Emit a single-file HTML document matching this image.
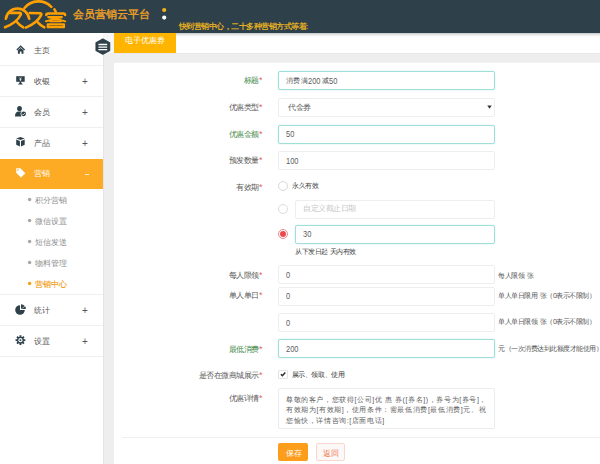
<!DOCTYPE html>
<html><head><meta charset="utf-8">
<style>
*{box-sizing:border-box;margin:0;padding:0}
html,body{width:600px;height:464px;overflow:hidden;background:#fff;font-family:"Liberation Sans",sans-serif;color:#555}
.a{position:absolute;white-space:nowrap}
#hdr{position:absolute;left:0;top:0;width:600px;height:33px;background:#2e414b}
#side{position:absolute;left:0;top:33px;width:103px;height:431px;background:#fff}
#gap{position:absolute;left:103px;top:33px;width:11px;height:431px;background:#eeeeee;border-left:1px solid #e4e4e4}
#tabbar{position:absolute;left:103px;top:33px;width:497px;height:20px;background:linear-gradient(to bottom,#c2c5c7 0px,#e2e3e3 1.5px,#f7f7f7 3px,#fff 4.5px)}
#tabgap{position:absolute;left:103px;top:33px;width:11px;height:20px;background:#f6f6f6}
#band{position:absolute;left:114px;top:53px;width:486px;height:10px;background:linear-gradient(to bottom,#e6e6e6 0,#eeeeee 1.5px,#eeeeee 9px,#f3f3f3 10px)}
#panel{position:absolute;left:114px;top:63px;width:486px;height:401px;background:#fff}
.sep{position:absolute;left:0;width:103px;height:1px;background:#efefef}
.mi{position:absolute;left:34px;font-size:8px;line-height:11px;color:#555}
.plus{position:absolute;left:82px;font-size:10px;line-height:12px;color:#555}
.sub{position:absolute;left:34.5px;font-size:8px;line-height:11px;color:#8c8c8c}
.dot{position:absolute;left:27.5px;width:3.5px;height:3.5px;border-radius:50%;background:#a0a0a0}
.lbl{position:absolute;white-space:nowrap;right:337.5px;font-size:8px;letter-spacing:-0.5px;line-height:11.5px;color:#5a5a5a;text-align:right}
.lbl i{font-style:normal;color:#ea5f5a;font-size:9px;vertical-align:top;line-height:11px;margin-left:0;letter-spacing:0}
.lbl.g{color:#468a4a}
.inp{position:absolute;left:278px;width:217px;height:19px;border:1px solid #eeeeee;border-radius:2px;background:#fff;font-size:8px;letter-spacing:-0.5px;line-height:17px;padding-left:7px;color:#555}
.inp.t{border:1px solid #9edfd9;box-shadow:0 0 1.5px rgba(120,215,205,0.45)}
.help{position:absolute;white-space:nowrap;left:498px;font-size:7px;letter-spacing:-0.5px;word-spacing:1.5px;line-height:8px;color:#555}
.radio{position:absolute;left:278px;width:10px;height:10px;border-radius:50%;border:1px solid #d8d8d8;background:#fff}
.d{font-weight:normal;font-size:8.9px;letter-spacing:0;display:inline-block;transform:scaleX(0.84);transform-origin:0 50%;line-height:17px;vertical-align:top;position:relative;top:0.7px;color:#5c5c5c}
</style></head><body>
<div id="hdr"></div><div class="a" style="left:0;top:33px;width:600px;height:1px;background:rgba(46,65,75,0.25)"></div>
<!-- logo -->
<svg class="a" style="left:0;top:0" width="70" height="32" viewBox="0 0 70 32">
 <g fill="none" stroke="#ffa000" stroke-width="2.6" stroke-linecap="round" stroke-linejoin="round">
  <path d="M5.8 18.8 A11.8 11.8 0 0 1 29.2 18.8"/>
  <path d="M24.5 8 A18 18 0 0 1 51.3 6.8"/>
  <path d="M9.5 12.9 L19.8 12.9 Q21.6 13.2 20.6 15 Q16.5 23 5 27.2"/>
  <path d="M16.6 21.7 Q19.3 25 23.3 27.3"/>
  <path d="M29.8 13 L40.3 13.2 Q42 13.5 41 15.3 Q37 23 25.8 27.6"/>
  <path d="M37.8 22.3 Q40.3 25.3 44.4 27.3"/>
  <path d="M54.4 9.3 L55.7 11.6"/>
  <path d="M46.3 15 Q46.3 13.5 48.2 13.5 L63.4 13.5 Q65.1 13.5 65.1 15" stroke-width="2.5"/>
  <path d="M48.3 17.1 H61.8" stroke-width="2.3"/>
  <path d="M49 17.4 Q57 18.8 65.3 21.3 M61.3 17.4 Q54 18.8 45.8 21.3" stroke-width="1.9"/>
  <path d="M50 21.3 H61" stroke-width="2.1"/>
  <rect x="47.8" y="24.4" width="16.1" height="2.8" stroke-width="2.3"/>
 </g>
</svg>
<div class="a" style="left:73px;top:8px;font-size:10.6px;line-height:12px;color:#f0a126;-webkit-text-stroke:0.35px #f0a126">会员营销云平台</div>
<svg class="a" style="left:150px;top:0" width="30" height="30"><circle cx="14.2" cy="10" r="2.1" fill="#f5b316"/><circle cx="14.2" cy="17.6" r="2.1" fill="#fff"/></svg>

<div class="a" style="left:178.5px;top:22px;font-size:8px;letter-spacing:-0.5px;line-height:9px;color:#f3bb1a;-webkit-text-stroke:0.2px #f3bb1a">快到营销中心，二十多种营销方式等着:</div>

<div id="side"></div>
<div id="gap"></div>
<div id="tabbar"></div>
<div id="tabgap"></div>
<div id="band"></div>
<div id="panel"></div>
<div class="a" style="left:114px;top:33px;width:62px;height:20px;background:#ffb400;color:#fff;font-size:7.5px;line-height:16px;text-align:center">电子优惠券</div>

<!-- sidebar -->
<div class="sep" style="top:65px"></div>
<div class="sep" style="top:96px"></div>
<div class="sep" style="top:127px"></div>
<div class="a" style="left:0;top:159px;width:103px;height:30px;background:#fdab24"></div>
<div class="sep" style="top:294px"></div>
<div class="sep" style="top:325px"></div>
<div class="sep" style="top:356px"></div>

<div class="mi" style="top:45px">主页</div>
<div class="mi" style="top:76px">收银</div><div class="plus" style="top:76px">+</div>
<div class="mi" style="top:107px">会员</div><div class="plus" style="top:107px">+</div>
<div class="mi" style="top:138px">产品</div><div class="plus" style="top:138px">+</div>
<div class="mi" style="top:168px;color:#fff">营销</div><div class="a" style="left:85px;top:174px;width:3.5px;height:1px;background:rgba(255,255,255,0.85)"></div>
<svg class="a" style="left:0;top:0" width="40" height="300"><g fill="#a8a8a8"><circle cx="29.6" cy="199.5" r="1.75"/><circle cx="29.6" cy="220.5" r="1.75"/><circle cx="29.6" cy="241.5" r="1.75"/><circle cx="29.6" cy="262.5" r="1.75"/><circle cx="29.6" cy="283.5" r="1.75" fill="#f7a21b"/></g></svg>
<div class="sub" style="top:195px">积分营销</div>
<div class="sub" style="top:216px">微信设置</div>
<div class="sub" style="top:237px">短信发送</div>
<div class="sub" style="top:258px">物料管理</div>
<div class="sub" style="top:279px;color:#f59c16;-webkit-text-stroke:0.15px #f59c16">营销中心</div>
<div class="mi" style="top:305px">统计</div><div class="plus" style="top:305px">+</div>
<div class="mi" style="top:336px">设置</div><div class="plus" style="top:336px">+</div>

<!-- sidebar icons -->
<svg class="a" style="left:0;top:0" width="103" height="464" viewBox="0 0 103 464">
<g fill="#2e414b">
 <path d="M16.8 50 L20.7 46.2 L24.6 50" fill="none" stroke="#2e414b" stroke-width="1.3"/>
 <path d="M17.9 50.3 L20.7 47.9 L23.5 50.3 L23.5 53.8 L21.5 53.8 L21.5 51.6 L19.9 51.6 L19.9 53.8 L17.9 53.8 Z"/>
 <rect x="16.2" y="76.2" width="8.5" height="5.6"/>
 <path d="M19.8 81.6 L21.1 81.6 L21.5 83.1 L23 84.5 L17.9 84.5 L19.4 83.1 Z"/>
 <ellipse cx="19.5" cy="108.6" rx="2.4" ry="2.7"/>
 <path d="M15 116.6 Q15 112.3 18.2 111.6 L20.8 111.6 Q21.8 111.8 22.4 112.2 L21.2 116.6 Z"/>
 <circle cx="23.6" cy="113.8" r="3" fill="#fff"/>
 <circle cx="23.6" cy="113.8" r="2.4"/>
 <path d="M20.45 136.9 L24.7 138.5 L20.45 140.1 L16.2 138.5 Z"/>
 <path d="M16.2 139.6 L19.9 141 L19.9 146.4 L16.2 144.8 Z M24.7 139.6 L21 141 L21 146.4 L24.7 144.8 Z"/>
 <path d="M20 305.2 A4.8 4.8 0 1 0 24.8 310 L20 310 Z"/>
 <path d="M21 304.2 A4.8 4.8 0 0 1 24.68 305.91 L21 309 Z"/>
 <path d="M21.4 309 L25.2 306.2 A4.8 4.8 0 0 1 25.8 309 Z"/>
 <g transform="translate(20.45 340.15)">
  <circle r="3.4"/>
  <rect x="-0.9" y="-4.9" width="1.8" height="9.8"/>
  <rect x="-0.9" y="-4.9" width="1.8" height="9.8" transform="rotate(45)"/>
  <rect x="-0.9" y="-4.9" width="1.8" height="9.8" transform="rotate(90)"/>
  <rect x="-0.9" y="-4.9" width="1.8" height="9.8" transform="rotate(135)"/>
  <circle r="2.1" fill="#fff"/>
  <circle r="0.95"/>
 </g>
</g>
<path d="M19.6 77.5 L20.45 79 L21.3 77.5 M20.45 79 V81 M19.5 79.6 H21.4" stroke="#fff" stroke-width="0.7" fill="none"/>
<path d="M22.4 113.9 L23.3 114.8 L24.9 113" stroke="#fff" stroke-width="0.8" fill="none"/>
<path d="M16.2 168.3 L20.4 168.3 L25.3 173.2 L21 177.6 L16.2 172.8 Z" fill="#fff"/>
<circle cx="17.9" cy="170" r="0.8" fill="#fdab24"/>
</svg>

<!-- hexagon toggle -->
<svg class="a" style="left:0;top:0" width="120" height="60" viewBox="0 0 120 60"><path d="M102.85 38.9 L109.7 42.7 L109.7 50.4 L102.85 54.2 L96 50.4 L96 42.7 Z" fill="#2e414b" stroke="#2e414b" stroke-width="1.1" stroke-linejoin="round"/><path d="M98.4 44.5 h8.8 M98.4 47.1 h8.8 M98.4 49.7 h8.8" stroke="#fff" stroke-width="1.3"/></svg>

<!-- form -->
<div class="lbl g" style="top:75px">标题<i>*</i></div>
<div class="inp t" style="top:71px;font-size:7px;letter-spacing:0.35px">消费满<b class="d" style="margin-right:-1.3px">200</b>减<b class="d" style="margin-right:-1.58px;margin-left:0.5px">50</b></div>
<div class="lbl" style="top:102px">优惠类型<i>*</i></div>
<div class="inp" style="top:98px;padding-left:9px">代金券</div>
<svg class="a" style="left:0;top:0" width="600" height="120"><path d="M487.3 105.6 L491.7 105.6 L489.5 108.8 Z" fill="#333"/></svg>
<div class="lbl g" style="top:129px">优惠金额<i>*</i></div>
<div class="inp t" style="top:124.5px"><b class="d" style="margin-right:-1.58px">50</b></div>
<div class="lbl" style="top:155px">预发数量<i>*</i></div>
<div class="inp" style="top:151px"><b class="d" style="margin-right:-2.38px">100</b></div>
<div class="lbl" style="top:182px">有效期<i>*</i></div>
<div class="radio" style="top:181px"></div>
<div class="a" style="left:292px;top:182px;font-size:7px;letter-spacing:-0.5px;line-height:8px;color:#444">永久有效</div>
<div class="radio" style="top:204px;border-color:#ddd"></div>
<div class="inp" style="left:295px;width:200px;top:199.5px;color:#c8c8c8;line-height:16px">自定义截止日期</div>
<div class="radio" style="top:229px;border-color:#f08a8c"><div class="a" style="left:1px;top:1px;width:6px;height:6px;border-radius:50%;background:#ea4a50"></div></div>
<div class="inp t" style="left:295px;width:200px;top:224.5px"><b class="d" style="margin-right:-1.58px">30</b></div>
<div class="a" style="left:295px;top:248px;font-size:7px;letter-spacing:-0.5px;word-spacing:1px;line-height:8px;color:#444">从下发日起 天内有效</div>

<div class="lbl" style="top:269.5px">每人限领<i>*</i></div>
<div class="inp" style="top:265px"><b class="d" style="margin-right:-0.79px">0</b></div>
<div class="help" style="top:271.5px">每人限领 张</div>
<div class="lbl" style="top:290px">单人单日<i>*</i></div>
<div class="inp" style="top:286.5px"><b class="d" style="margin-right:-0.79px">0</b></div>
<div class="help" style="top:292px">单人单日限用 张（0表示不限制）</div>
<div class="inp" style="top:313px"><b class="d" style="margin-right:-0.79px">0</b></div>
<div class="help" style="top:317.5px">单人单日限领 张（0表示不限制）</div>
<div class="lbl g" style="top:343.5px">最低消费<i>*</i></div>
<div class="inp t" style="top:339px"><b class="d" style="margin-right:-2.38px">200</b></div>
<div class="help" style="top:345px">元（一次消费达到此额度才能使用）</div>

<div class="lbl" style="top:369.5px">是否在微商城展示<i>*</i></div>
<div class="a" style="left:278px;top:369.5px;width:9.5px;height:9.5px;border:1px solid #e3e3e3;border-radius:1px;background:#fff"></div>
<svg class="a" style="left:279px;top:370px" width="8" height="8" viewBox="0 0 8 8"><path d="M1.9 4.3 L3.4 5.8 L6.3 2.6" stroke="#2b2b2b" stroke-width="1.45" fill="none"/></svg>
<div class="a" style="left:291.5px;top:370.5px;font-size:7px;letter-spacing:-0.4px;line-height:8px;color:#333">展示、领取、使用</div>
<div class="lbl" style="top:392.5px">优惠详情<i>*</i></div>
<div class="a" style="left:278px;top:388px;width:217px;height:41px;border:1px solid #ececec;border-radius:2px;background:#fff;padding:5.5px 0 0 7px;font-size:7px;letter-spacing:0.6px;line-height:10.7px;color:#606060;white-space:nowrap">尊敬的客户，您获得[公司]优 惠 券([券名])，券号为[券号]，<br>有效期为[有效期]，使用条件：需最低消费[最低消费]元。祝<br>您愉快，详情咨询:[店面电话]</div>
<div class="a" style="left:122px;top:436.5px;width:478px;height:1px;background:#efefef"></div>
<div class="a" style="left:278px;top:442.5px;width:30px;height:18.5px;background:#fc9d1c;border-radius:2px;color:#fff;font-size:8px;line-height:21px;text-align:center;padding-left:1px">保存</div>
<div class="a" style="left:316px;top:442.5px;width:29px;height:18.5px;background:#fcf8f7;border:1px solid #f9d6ce;border-radius:2px;color:#ee7a52;font-size:8px;line-height:19px;text-align:center">返回</div>
</body></html>
